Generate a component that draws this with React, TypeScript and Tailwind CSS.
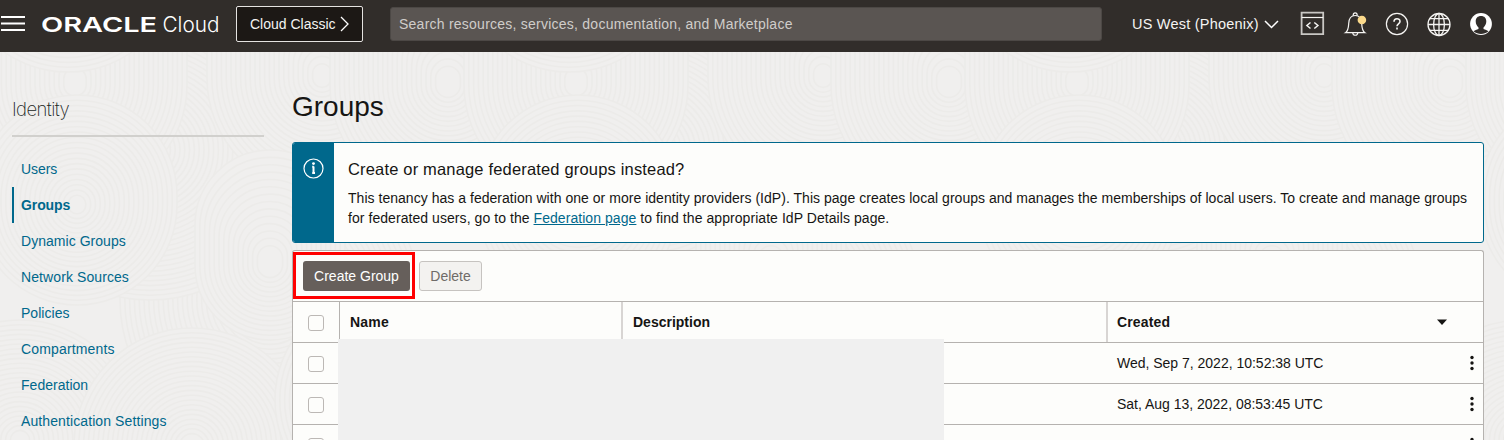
import React from "react";

// One tile of the backdrop: centre x, centre y, radius, upward stretch.
const SWIRLS: [number, number, number, number][] = [
  [200, 60, 130, 60],
  [270, 300, 150, 0],
  [150, 150, 150, 0],
  [322, 78, 115, 60],
  [448, 85, 118, 60],
  [75, 85, 112, 60],
  [270, 265, 75, 40],
  [77, 205, 100, 10],
  [20, 440, 120, 0],
  [192, 446, 118, 0],
  [385, 400, 110, 0],
  [68, -40, 112, 0],
];
const PERIOD = 501;
const STEP = 4.8;

function Texture() {
  return (
    <svg className="pointer-events-none absolute inset-0 -z-10" width="1504" height="440" aria-hidden="true">
      <rect width="1504" height="440" fill="#f0efee" />
      {[-1, 0, 1, 2, 3].map((n) => (
        <g key={n} fill="none" stroke="#ecebe9" strokeWidth="1.6">
          {SWIRLS.map(([x, y, r, s], i) => (
            <g key={i}>
              {Array.from({ length: Math.floor((r - 4) / STEP) }, (_, k) => {
                const q = r - k * STEP;
                const up = (s * q) / r;
                return (
                  <rect
                    key={k}
                    x={x + n * PERIOD - q}
                    y={y - q - up}
                    width={2 * q}
                    height={2 * q + up}
                    rx={q}
                    fill={k === 0 ? "#f0efee" : "none"}
                  />
                );
              })}
            </g>
          ))}
        </g>
      ))}
    </svg>
  );
}

const NAV: [string, string][] = [
  ["Users", "tracking-[-0.05px]"],
  ["Groups", "font-bold tracking-[-0.1px]"],
  ["Dynamic Groups", "tracking-[0.04px]"],
  ["Network Sources", "tracking-[0.09px]"],
  ["Policies", "tracking-[0.03px]"],
  ["Compartments", "tracking-[0.15px]"],
  ["Federation", "tracking-[0.02px]"],
  ["Authentication Settings", "tracking-[0.1px]"],
];

function Header() {
  return (
    <header className="flex h-[52px] shrink-0 items-start bg-[#312d2a] text-[#f5f4f2]">
      <svg className="mt-[15px] ml-px" width="24" height="17" fill="none" stroke="#fff" strokeWidth="2">
        <path d="M0 2h24M0 8.5h24M0 15h24" />
      </svg>
      <svg className="mt-3 ml-[17px]" width="180" height="24" fill="#fff" aria-label="Oracle Cloud">
        <text x="-1" y="20" textLength="116" lengthAdjust="spacingAndGlyphs" className="font-['Inter'] text-[20.5px] font-semibold">ORACLE</text>
        <text x="120.5" y="20" textLength="57" lengthAdjust="spacingAndGlyphs" className="font-['Inter'] text-[21.5px] font-light">Cloud</text>
      </svg>
      <button className="mt-1.5 ml-[14px] flex h-9 w-[127px] items-center rounded-[2px] border border-[#e5e3e1] bg-[#1c1815] pl-[13px] text-[14px]">
        <span className="w-[86px] text-left whitespace-nowrap">Cloud Classic</span>
        <svg className="ml-1" width="10" height="16" fill="none" stroke="#fff" strokeWidth="1.3"><path d="M1 1l7 7-7 7" /></svg>
      </button>
      <div className="mt-[7px] ml-[27px] flex h-[34px] w-[712px] items-center rounded-[3px] border border-[#4c4845] bg-[#5a5552] pt-px pl-2 text-[14px] text-[#d0cdca]">
        <span className="tracking-[0.24px]">Search resources, services, documentation, and Marketplace</span>
      </div>
      <div className="mt-[14px] ml-[30px] flex w-[168px] items-center text-[14.5px] leading-5">
        <span className="w-[128px] tracking-[0.22px] whitespace-nowrap">US West (Phoenix)</span>
        <svg className="ml-1" width="15" height="10" fill="none" stroke="#fff" strokeWidth="1.5"><path d="M1 2l6.5 6.5L14 2" /></svg>
      </div>
      <svg className="mt-[11px]" width="204" height="26" fill="none" stroke="#f5f4f2" strokeWidth="1.2">
        <g>
          <path d="M1.6 1.6h21.6v21.6H1.6z" stroke="#c9c7c4" strokeWidth="1.8" />
          <path d="M1.6 6.5h21.6" />
          <path d="M10.5 11.5l-3.6 3 3.6 3M14.3 11.5l3.6 3-3.6 3" strokeWidth="1.5" />
        </g>
        <path d="M45.5 21.7c3-2 3-5.5 3.2-9.2.2-4.7 2.500-8 6.500-8s6.300 3.300 6.500 8c.2 3.700.2 7.200 3.200 9.200zM53.200 4.300c0-3.200 4-3.200 4 0M52.700 21.700c.2 3.400 4.900 3.400 5.100 0" />
        <circle cx="61.9" cy="9" r="4.3" fill="#fbd98b" stroke="none" />
        <circle cx="97" cy="13" r="10.6" />
        <path d="M94 10.800c0-4 6-3.800 6-.4 0 2.400-3 2.400-3 4.800M97 16.400v2" strokeWidth="1.6" />
        <g strokeWidth="1.3">
          <circle cx="139" cy="13.5" r="11" />
          <ellipse cx="139" cy="13.5" rx="5.4" ry="11" />
          <path d="M139 2.500v22M128 13.500h22M129.800 7.600h18.400M129.800 19.400h18.400" />
        </g>
        <circle cx="181" cy="13" r="10.9" fill="#fff" stroke="none" />
        <path d="M181 4.900c-3.400 0-5.300 2.200-5.300 5.400 0 2.600 1.200 4.900 2.800 6.100v1.700c-2 .8-3.600 1.300-5 2.200 4.500 3.600 10.500 3.600 15 0-1.400-.9-3-1.400-5-2.200v-1.700c1.600-1.200 2.800-3.500 2.800-6.100 0-3.200-1.900-5.400-5.300-5.400z" fill="#312d2a" stroke="none" />
      </svg>
    </header>
  );
}

function Sidebar() {
  return (
    <aside className="w-[264px] shrink-0 pl-3">
      <h2 className="mt-[45px] h-[38px] font-['Inter'] text-[18.5px] leading-6 font-extralight tracking-[-0.6px] text-[#201e1c]">Identity</h2>
      <div className="h-[2px] bg-[#d1d0cd]" />
      <nav className="mt-[14px]">
        {NAV.map(([label, cls], i) => (
          <a key={label} className={`flex h-9 items-center border-l-2 pl-[7px] text-[14px] text-[#00688c] ${i === 1 ? "border-[#00688c]" : "border-transparent"}`}>
            <span className={cls}>{label}</span>
          </a>
        ))}
      </nav>
    </aside>
  );
}

function Check() {
  return <span className="block size-4 rounded-[3px] border border-[#bcb8b5] bg-[#fdfdfb]" />;
}

function Row({ date }: { date: string }) {
  return (
    <div className="flex h-[41px] shrink-0 border-b border-[#b5b2af]">
      <div className="w-[46px] pt-[13px] pl-[15px]"><Check /></div>
      <div className="w-[778px]" />
      <div className="flex-1 pt-[10px] leading-5"><span className="tracking-[-0.01px]">{date}</span></div>
      <svg className="mt-[12px] mr-[9px]" width="4" height="16" fill="#161513">
        <circle cx="2" cy="2.5" r="1.7" /><circle cx="2" cy="8" r="1.7" /><circle cx="2" cy="13.5" r="1.7" />
      </svg>
    </div>
  );
}

export default function App() {
  return (
    <div className="relative isolate flex h-[440px] w-[1504px] flex-col overflow-hidden font-['Liberation_Sans',sans-serif] text-[14px] text-[#161513]">
      <Texture />
      <Header />
      <div className="flex min-h-0 flex-1">
        <Sidebar />
        <main className="ml-7 w-[1192px] shrink-0">
          <h1 className="mt-[37px] h-[53px] text-[28px] leading-9">Groups</h1>
          <section className="flex h-[101px] overflow-hidden rounded-[3px] border border-[#00688c] bg-[#fdfdfb]">
            <div className="w-[41px] shrink-0 bg-[#00688c] pt-[15px] pl-[10px]">
              <svg width="22" height="22" fill="none" stroke="#fff" strokeWidth="1.2">
                <circle cx="10.5" cy="10.5" r="9.5" />
                <path d="M10.500 8.500v6.500M9.200 8.800h1.600M9.200 15h2.800" strokeWidth="2" />
                <circle cx="10.5" cy="5.6" r="1.4" fill="#fff" stroke="none" />
              </svg>
            </div>
            <div className="pt-[15px] pl-[14px] whitespace-nowrap">
              <h3 className="h-[30px] text-[16.5px] leading-[22px] tracking-[0.17px]">Create or manage federated groups instead?</h3>
              <p className="leading-5 tracking-[0.03px]">
                This tenancy has a federation with one or more identity providers (IdP). This page creates local groups and manages the memberships of local users. To create and manage groups
                <br />
                <span className="tracking-[0.06px]">for federated users, go to the <a className="text-[#00688c] underline">Federation page</a> to find the appropriate IdP Details page.</span>
              </p>
            </div>
          </section>
          <section className="relative mt-[7px] flex h-[200px] flex-col rounded-t-[3px] border border-b-0 border-[#b5b2af] bg-[#fdfdfb]">
            <div className="flex h-[51px] shrink-0 items-start border-b border-[#b5b2af] pt-px">
              <div className="flex h-[47px] w-[122px] items-center border-[3px] border-[#ff0000] pl-[7px]">
                <button className="h-[30px] w-[107px] rounded-[3px] bg-[#665f5b] pt-px whitespace-nowrap text-white">Create Group</button>
              </div>
              <button className="mt-[9px] ml-[4px] h-[30px] w-[63px] rounded-[3px] border border-[#c6c3c0] bg-[#f3f2f0] text-[#6f6b68]">Delete</button>
            </div>
            <div className="flex h-[41px] shrink-0 border-b border-[#b5b2af] leading-[20px] font-bold">
              <div className="w-[46px] pt-[13px] pl-[15px]"><Check /></div>
              <div className="w-[282px] border-l border-[#b5b2af] pt-[10px] pl-[10px] tracking-[0.2px]">Name</div>
              <div className="w-[485px] border-l-2 border-[#d8d5d3] pt-[10px] pl-[10px]">Description</div>
              <div className="flex flex-1 justify-between border-l-2 border-[#d8d5d3] pt-[10px] pl-[9px]">
                <span className="tracking-[0.15px]">Created</span>
                <svg className="mt-[7px] mr-[35px]" width="12" height="6" fill="#161513"><path d="M1 .5h10L6 6z" /></svg>
              </div>
            </div>
            <Row date="Wed, Sep 7, 2022, 10:52:38 UTC" />
            <Row date="Sat, Aug 13, 2022, 08:53:45 UTC" />
            <Row date="" />
            <div className="absolute top-[88px] left-[45px] h-[110px] w-[606px] bg-[#f0f0f0]" />
          </section>
        </main>
      </div>
    </div>
  );
}
